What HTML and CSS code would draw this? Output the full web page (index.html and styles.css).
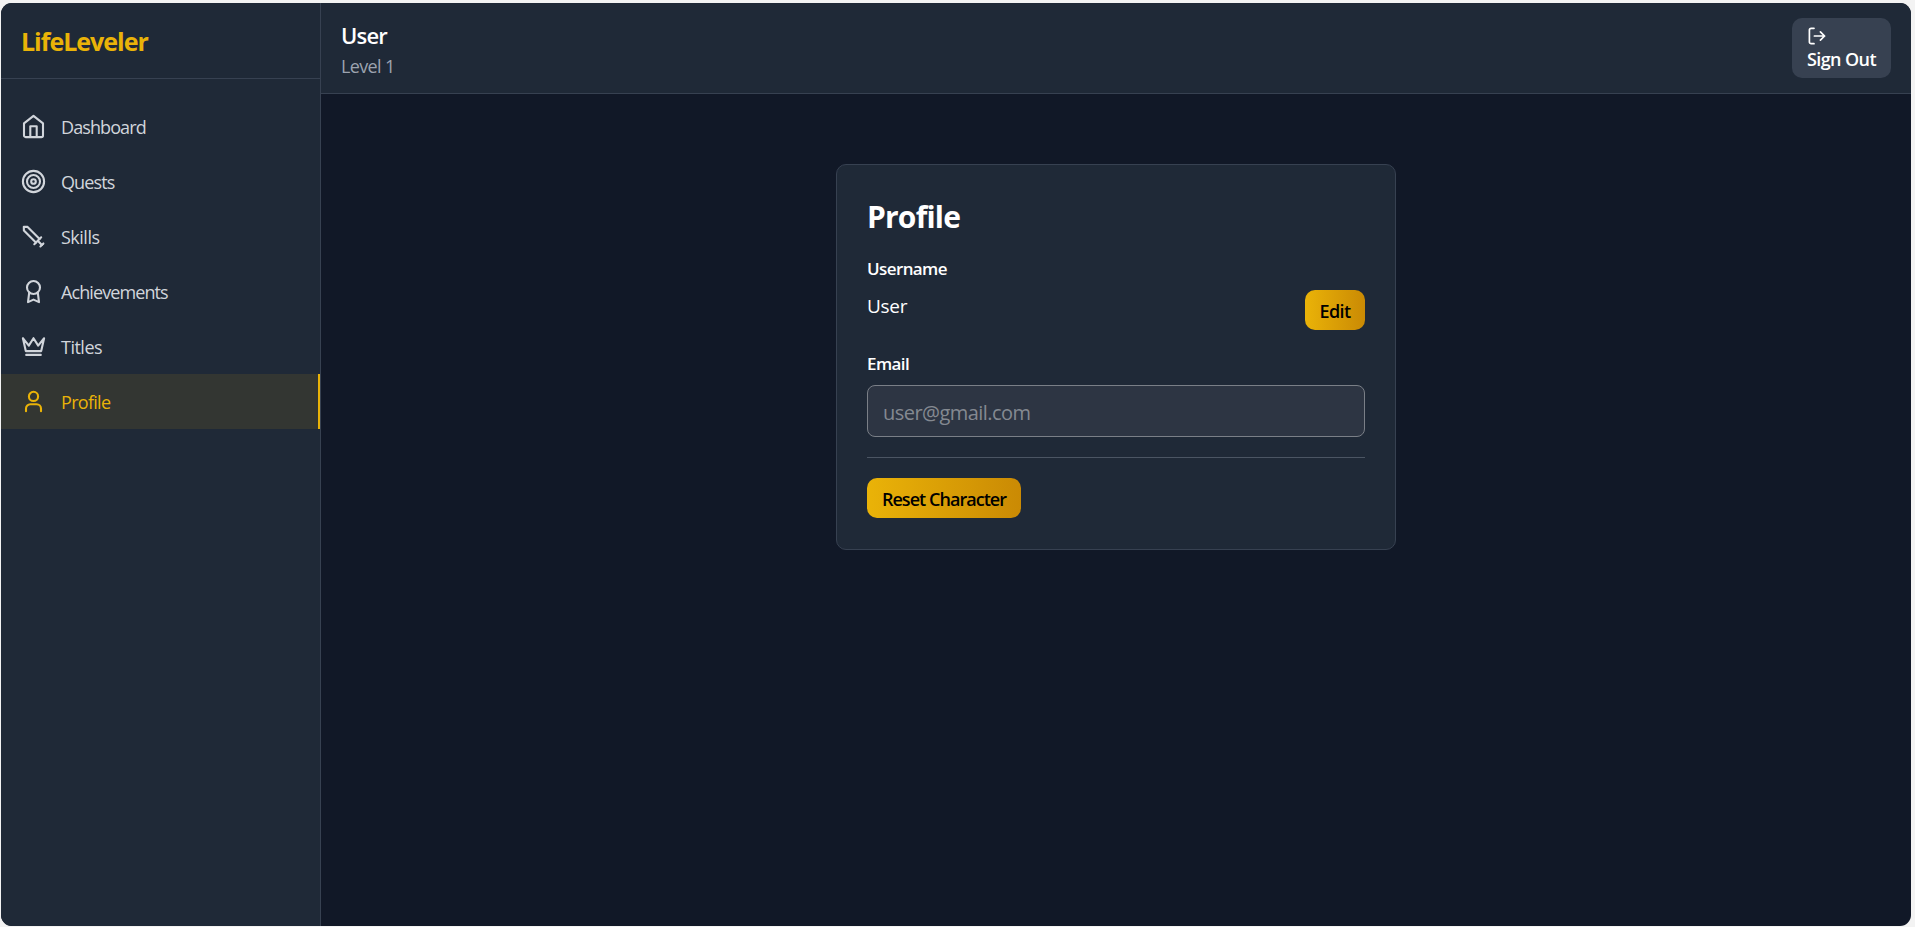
FILE: index.html
```html
<!DOCTYPE html>
<html lang="en">
<head>
    <meta charset="UTF-8">
    <title>LifeLeveler - Profile</title>
    <link rel="stylesheet" href="styles.css">
</head>
<body>
    <div class="app">
        <aside class="sidebar">
            <div class="brand">LifeLeveler</div>
            <nav class="nav">
                <a class="nav-item">
                    <svg class="icon" viewBox="0 0 25 25"><path d="M3 9.3 12.5 1.9 22 9.3V21.5a1.6 1.6 0 0 1-1.6 1.6H4.6A1.6 1.6 0 0 1 3 21.5z"/><path d="M9.3 23V12.2h6.4V23"/></svg>
                    <span>Dashboard</span>
                </a>
                <a class="nav-item">
                    <svg class="icon" viewBox="0 0 25 25"><circle cx="12.5" cy="12.5" r="10.6"/><circle cx="12.5" cy="12.5" r="6.5"/><circle cx="12.5" cy="12.5" r="2.3"/></svg>
                    <span>Quests</span>
                </a>
                <a class="nav-item">
                    <svg class="icon" viewBox="0 0 25 25"><path d="M18.6 14.9 6.6 2.9 2.8 2.8 2.9 6.6 14.9 18.6"/><path d="M20.2 13.3 13.3 20.2"/><path d="M17 17 20.9 20.9"/><path d="M22.4 19.4 19.4 22.4"/></svg>
                    <span class="skills">Skills</span>
                </a>
                <a class="nav-item">
                    <svg class="icon" viewBox="0 0 25 25"><circle cx="12.5" cy="8.5" r="6.5"/><path d="M8.2 13.6 7 23.1 12.5 20.6 18 23.1 16.8 13.6"/></svg>
                    <span>Achievements</span>
                </a>
                <a class="nav-item">
                    <svg class="icon" viewBox="0 0 25 25"><path d="M1.9 4.2 4.8 17.1H20.2L23.1 4.2 17.2 11.6 12.5 4.2 7.8 11.6z"/><path d="M5.2 20.9H19.8"/></svg>
                    <span class="titles">Titles</span>
                </a>
                <a class="nav-item active">
                    <svg class="icon" viewBox="0 0 25 25"><circle cx="12.5" cy="7.4" r="4.6"/><path d="M5 22.2V19.6a4.4 4.4 0 0 1 4.4-4.4h6.2a4.4 4.4 0 0 1 4.4 4.4v2.6"/></svg>
                    <span>Profile</span>
                </a>
            </nav>
        </aside>

        <div class="content">
            <header class="topbar">
                <div class="player">
                    <div class="player-name">User</div>
                    <div class="player-level">Level 1</div>
                </div>
                <button class="sign-out">
                    <svg class="sign-out-icon" viewBox="0 0 20 20"><path d="M7 2.3H4.2A1.8 1.8 0 0 0 2.4 4.1v11.8a1.8 1.8 0 0 0 1.8 1.8H7"/><path d="M7.4 10H17.6M13.4 5.8 17.6 10 13.4 14.2"/></svg>
                    <span>Sign Out</span>
                </button>
            </header>

            <main class="main">
                <div class="card">
                    <h1>Profile</h1>
                    <div class="label">Username</div>
                    <div class="username-row">
                        <span class="username">User</span>
                        <button class="btn edit">Edit</button>
                    </div>
                    <label class="label" for="email">Email</label>
                    <input class="email" type="email" id="email" placeholder="user@gmail.com" disabled>
                    <hr>
                    <button class="btn reset">Reset Character</button>
                </div>
            </main>
        </div>
    </div>
</body>
</html>
```
FILE: styles.css
```css
* {
    box-sizing: border-box;
}
body {
    margin: 0;
    padding: 3px 4px 1px 1px;
    height: 927px;
    overflow: hidden;
    background: #f3f3f3;
    font-family: "Segoe UI", "Open Sans", "Noto Sans", sans-serif;
    color: white;
}
button, input {
    font-family: inherit;
}
.app {
    display: flex;
    height: 100%;
    border-radius: 11px;
    overflow: hidden;
    background: #111827;
}
.sidebar {
    width: 320px;
    background: #1f2937;
    border-right: 1px solid #374151;
}
.brand {
    height: 76px;
    padding: 0 20px;
    border-bottom: 1px solid #374151;
    color: #eab308;
    font-size: 25px;
    font-weight: 700;
    line-height: 77px;
    letter-spacing: -1px;
}
.nav {
    padding-top: 20px;
}
.nav-item {
    display: flex;
    align-items: center;
    gap: 15px;
    height: 55px;
    padding: 0 20px;
    color: #d1d5db;
    font-size: 18px;
    letter-spacing: -0.9px;
}
.nav-item .skills, .nav-item .titles {
    letter-spacing: -0.5px;
}
.nav-item.active {
    background: rgba(234, 179, 8, 0.1);
    border-right: 2px solid #eab308;
    color: #eab308;
    letter-spacing: -0.7px;
}
.icon {
    width: 25px;
    height: 25px;
}
.icon, .sign-out-icon {
    display: block;
    fill: none;
    stroke: currentColor;
    stroke-width: 2.1;
    stroke-linecap: round;
    stroke-linejoin: round;
}
.content {
    flex: 1;
}
.topbar {
    display: flex;
    justify-content: space-between;
    align-items: center;
    height: 91px;
    padding: 0 20px;
    background: #1f2937;
    border-bottom: 1px solid #374151;
}
.player {
    padding-top: 3px;
}
.player-name {
    font-size: 22px;
    font-weight: 600;
    line-height: 33px;
    letter-spacing: -0.8px;
}
.player-level {
    color: #9ca3af;
    font-size: 18px;
    line-height: 28px;
    letter-spacing: -0.65px;
}
.sign-out {
    width: 99px;
    height: 60px;
    padding: 8px 15px;
    border: none;
    border-radius: 10px;
    background: #374151;
    color: white;
    font-size: 18px;
    font-weight: 600;
    line-height: 26px;
    letter-spacing: -0.6px;
    text-align: left;
    white-space: nowrap;
}
.sign-out-icon {
    width: 20px;
    height: 20px;
    stroke-width: 1.7;
}
.main {
    display: flex;
    justify-content: center;
    padding-top: 70px;
}
.card {
    width: 560px;
    height: 386px;
    padding: 30px;
    background: #1f2937;
    border: 1px solid #374151;
    border-radius: 10px;
}
h1 {
    margin: 0 0 17px;
    font-size: 30px;
    line-height: 43px;
    letter-spacing: -0.8px;
}
.label {
    display: block;
    font-size: 17px;
    font-weight: 600;
    line-height: 27px;
    letter-spacing: -0.6px;
}
.username-row {
    display: flex;
    justify-content: space-between;
    margin: 8px 0 20px;
    height: 40px;
}
.username {
    font-size: 19px;
    line-height: 32px;
    letter-spacing: -0.3px;
}
.btn {
    height: 40px;
    padding: 2px 0 0;
    border: none;
    border-radius: 10px;
    background: linear-gradient(to right, #eab308, #ca8a04);
    color: black;
    font-size: 18px;
    font-weight: 600;
    letter-spacing: -0.95px;
}
.edit {
    width: 60px;
    letter-spacing: -0.6px;
}
.reset {
    width: 154px;
}
.email {
    display: block;
    width: 100%;
    height: 52px;
    margin-top: 8px;
    padding: 2px 15px 0;
    background: #2d3543;
    border: 1px solid #7a7f87;
    border-radius: 8px;
    font-size: 20px;
    letter-spacing: -0.55px;
}
.email::placeholder {
    color: #848991;
}
hr {
    margin: 20px 0;
    border: none;
    border-top: 1px solid #4b5563;
}
```
